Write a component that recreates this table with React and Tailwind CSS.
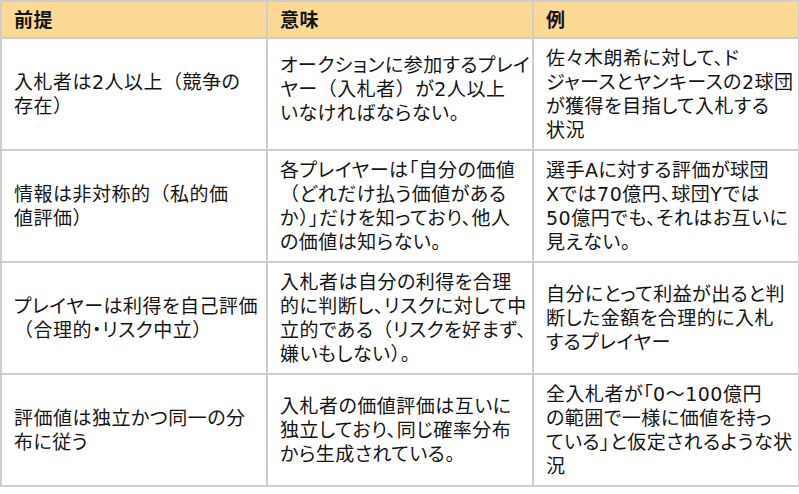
const rows = [
  {
    premise: ['入札者は2人以上（競争の', '存在）'],
    meaning: ['オークションに参加するプレイ', 'ヤー（入札者）が2人以上', 'いなければならない。'],
    meaningPad: 'pb-[10px]',
    example: ['佐々木朗希に対して、ド', 'ジャースとヤンキースの2球団', 'が獲得を目指して入札する', '状況'],
  },
  {
    premise: ['情報は非対称的（私的価', '値評価）'],
    meaning: ['各プレイヤーは「自分の価値', '（どれだけ払う価値がある', 'か）」だけを知っており、他人', 'の価値は知らない。'],
    example: ['選手Aに対する評価が球団', 'Xでは70億円、球団Yでは', '50億円でも、それはお互いに', '見えない。'],
  },
  {
    premise: ['プレイヤーは利得を自己評価', '（合理的・リスク中立）'],
    meaning: ['入札者は自分の利得を合理', '的に判断し、リスクに対して中', '立的である（リスクを好まず、', '嫌いもしない）。'],
    example: ['自分にとって利益が出ると判', '断した金額を合理的に入札', 'するプレイヤー'],
  },
  {
    premise: ['評価値は独立かつ同一の分', '布に従う'],
    meaning: ['入札者の価値評価は互いに', '独立しており、同じ確率分布', 'から生成されている。'],
    example: ['全入札者が「0～100億円', 'の範囲で一様に価値を持っ', 'ている」と仮定されるような状', '況'],
  },
]

// full-width parentheses keep their side bearings, like the source deck font
function Line({ text }) {
  const parts = text.split(/([（）])/)
  return (
    <div className="whitespace-nowrap">
      {parts.map((p, i) =>
        p === '（' || p === '）' ? (
          <span key={i} className="[font-feature-settings:normal]">{p}</span>
        ) : (
          p
        )
      )}
    </div>
  )
}

function Lines({ lines }) {
  return lines.map((l, i) => <Line key={i} text={l} />)
}

export default function App() {
  const cell = 'border-2 border-[#cdcdcd] px-3 align-middle'
  return (
    <div
      className="w-[799px] h-[494px] bg-white text-[#141414] text-[19px] leading-[24px] tracking-[0.5px] [font-feature-settings:'palt']"
      style={{ fontFamily: '"DejaVu Sans", "Noto Sans CJK JP", sans-serif' }}
    >
      <table className="w-[798px] table-fixed border-collapse">
        <colgroup>
          <col className="w-[266px]" />
          <col className="w-[266px]" />
          <col className="w-[266px]" />
        </colgroup>
        <thead>
          <tr className="h-[37px] bg-[#fdd996] font-bold">
            <th className={`${cell} text-left`}>前提</th>
            <th className={`${cell} text-left`}>意味</th>
            <th className={`${cell} text-left`}>例</th>
          </tr>
        </thead>
        <tbody>
          {rows.map((r, i) => (
            <tr key={i} className="h-[112px]">
              <td className={cell}><Lines lines={r.premise} /></td>
              <td className={`${cell} ${r.meaningPad || ''}`}><Lines lines={r.meaning} /></td>
              <td className={cell}><Lines lines={r.example} /></td>
            </tr>
          ))}
        </tbody>
      </table>
    </div>
  )
}
